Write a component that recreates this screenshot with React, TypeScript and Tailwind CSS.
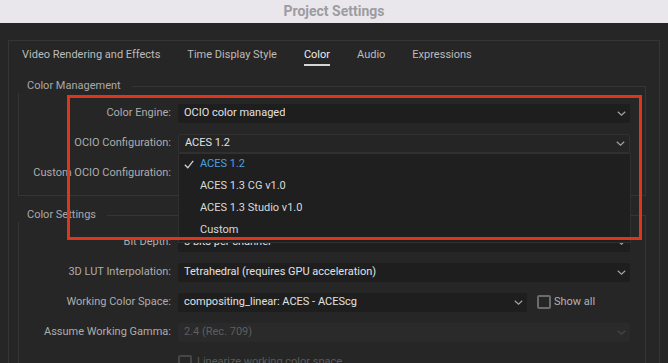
import type { ReactNode } from 'react'

const tabs = ['Video Rendering and Effects', 'Time Display Style', 'Color', 'Audio', 'Expressions']
const ocioOptions = ['ACES 1.2', 'ACES 1.3 CG v1.0', 'ACES 1.3 Studio v1.0', 'Custom']

function Chevron({ dim }: { dim?: boolean }) {
  return (
    <svg width="9" height="5" viewBox="0 0 9 5" className="shrink-0">
      <polyline
        points="0.8,0.8 4.5,4.2 8.2,0.8"
        fill="none"
        stroke={dim ? '#474747' : '#a3a3a3'}
        strokeWidth="1.2"
      />
    </svg>
  )
}

function Select({ value, dim, open, className = '' }: { value: string; dim?: boolean; open?: boolean; className?: string }) {
  return (
    <div
      className={`flex h-[19px] items-center justify-between rounded-[2px] pl-[6px] pr-[4px] ${
        dim ? 'bg-[#2a2a2a] text-[#5e5e5e]' : open ? 'bg-[#252525] text-[#e2e2e2]' : 'bg-[#1e1e1e] text-[#e2e2e2]'
      } ${className}`}
    >
      <span className="truncate">{value}</span>
      <Chevron dim={dim} />
    </div>
  )
}

function Row({ label, children }: { label: string; children?: ReactNode }) {
  return (
    <div className="flex h-[30px] items-center">
      <div className="w-[152px] shrink-0 whitespace-nowrap text-right text-[#adadad]">{label}</div>
      <div className="ml-[7px] flex flex-1 items-center">{children}</div>
    </div>
  )
}

function Group({ title, children }: { title: string; children: ReactNode }) {
  return (
    <fieldset className="ml-[9px] mr-[13px] border border-[#353535] pr-[15px]">
      <legend className="-ml-px pl-[9px] pr-[11px] leading-[14px] text-[#a9a9a9]">{title}</legend>
      <div className="pt-[5px] pb-[7px]">{children}</div>
    </fieldset>
  )
}

function CheckBox({ dim }: { dim?: boolean }) {
  return (
    <div
      className={`h-[14px] w-[14px] shrink-0 rounded-[2px] border-2 ${dim ? 'border-[#464646]' : 'border-[#6b6b6b]'}`}
    />
  )
}

export default function App() {
  return (
    <div className="relative h-[363px] w-[668px] overflow-hidden bg-[#262626] font-['Roboto',sans-serif] text-[11px]">
      <div className="flex h-[23px] items-center justify-center pb-px bg-[#e9e7ec] text-[14px] font-bold text-[#9d9ca1]">
        Project Settings
      </div>

      <div className="mx-2 mt-[17px] h-[400px] border border-b-0 border-[#353535]">
        <div className="flex gap-[27px] pl-[13px] pt-[7px]">
          {tabs.map((t) => (
            <div key={t} className="flex flex-col">
              <span className={`leading-[14px] ${t === 'Color' ? 'text-[#ececec]' : 'text-[#bcbcbc]'}`}>{t}</span>
              <div className={`mt-[2px] h-[2px] ${t === 'Color' ? 'bg-[#d4d4d4]' : ''}`} />
            </div>
          ))}
        </div>

        <div className="mt-[13px]">
          <Group title="Color Management">
            <Row label="Color Engine:">
              <Select value="OCIO color managed" className="flex-1" />
            </Row>
            <Row label="OCIO Configuration:">
              <div className="relative flex-1">
                <Select value="ACES 1.2" open className="border border-[#303030]" />
                <div className="absolute -right-px left-0 top-full z-10 border border-[#303030] bg-[#1f1f1f]">
                  {ocioOptions.map((o, i) => (
                    <div key={o} className="flex h-[22px] items-center">
                      <div className="flex w-[21px] justify-end pr-[6px]">
                        {i === 0 && (
                          <svg width="10" height="9" viewBox="0 0 10 9">
                            <polyline points="0.8,4.8 3.8,7.8 9.2,0.8" fill="none" stroke="#d2d2d2" strokeWidth="1.3" />
                          </svg>
                        )}
                      </div>
                      <span className={i === 0 ? 'text-[#4c9fe0]' : 'text-[#dadada]'}>{o}</span>
                    </div>
                  ))}
                </div>
              </div>
            </Row>
            <Row label="Custom OCIO Configuration:">
              <Select value="" className="flex-1" />
            </Row>
          </Group>
        </div>

        <div className="mt-[12px]">
          <Group title="Color Settings">
            <Row label="Bit Depth:">
              <Select value="8 bits per channel" className="flex-1" />
            </Row>
            <Row label="3D LUT Interpolation:">
              <Select value="Tetrahedral (requires GPU acceleration)" className="flex-1" />
            </Row>
            <Row label="Working Color Space:">
              <Select value="compositing_linear: ACES - ACEScg" className="w-[349px]" />
              <div className="ml-[10px] flex items-center gap-[3px] text-[#b2b2b2]">
                <CheckBox />
                <span>Show all</span>
              </div>
            </Row>
            <Row label="Assume Working Gamma:">
              <Select value="2.4 (Rec. 709)" dim className="flex-1" />
            </Row>
            <Row label="">
              <div className="flex items-center gap-[5px] text-[#5b5b5b]">
                <CheckBox dim />
                <span>Linearize working color space</span>
              </div>
            </Row>
          </Group>
        </div>
      </div>

      <div className="absolute left-[67px] top-[95px] z-20 h-[145px] w-[575px] border-[3px] border-[#de361d]" />
    </div>
  )
}
